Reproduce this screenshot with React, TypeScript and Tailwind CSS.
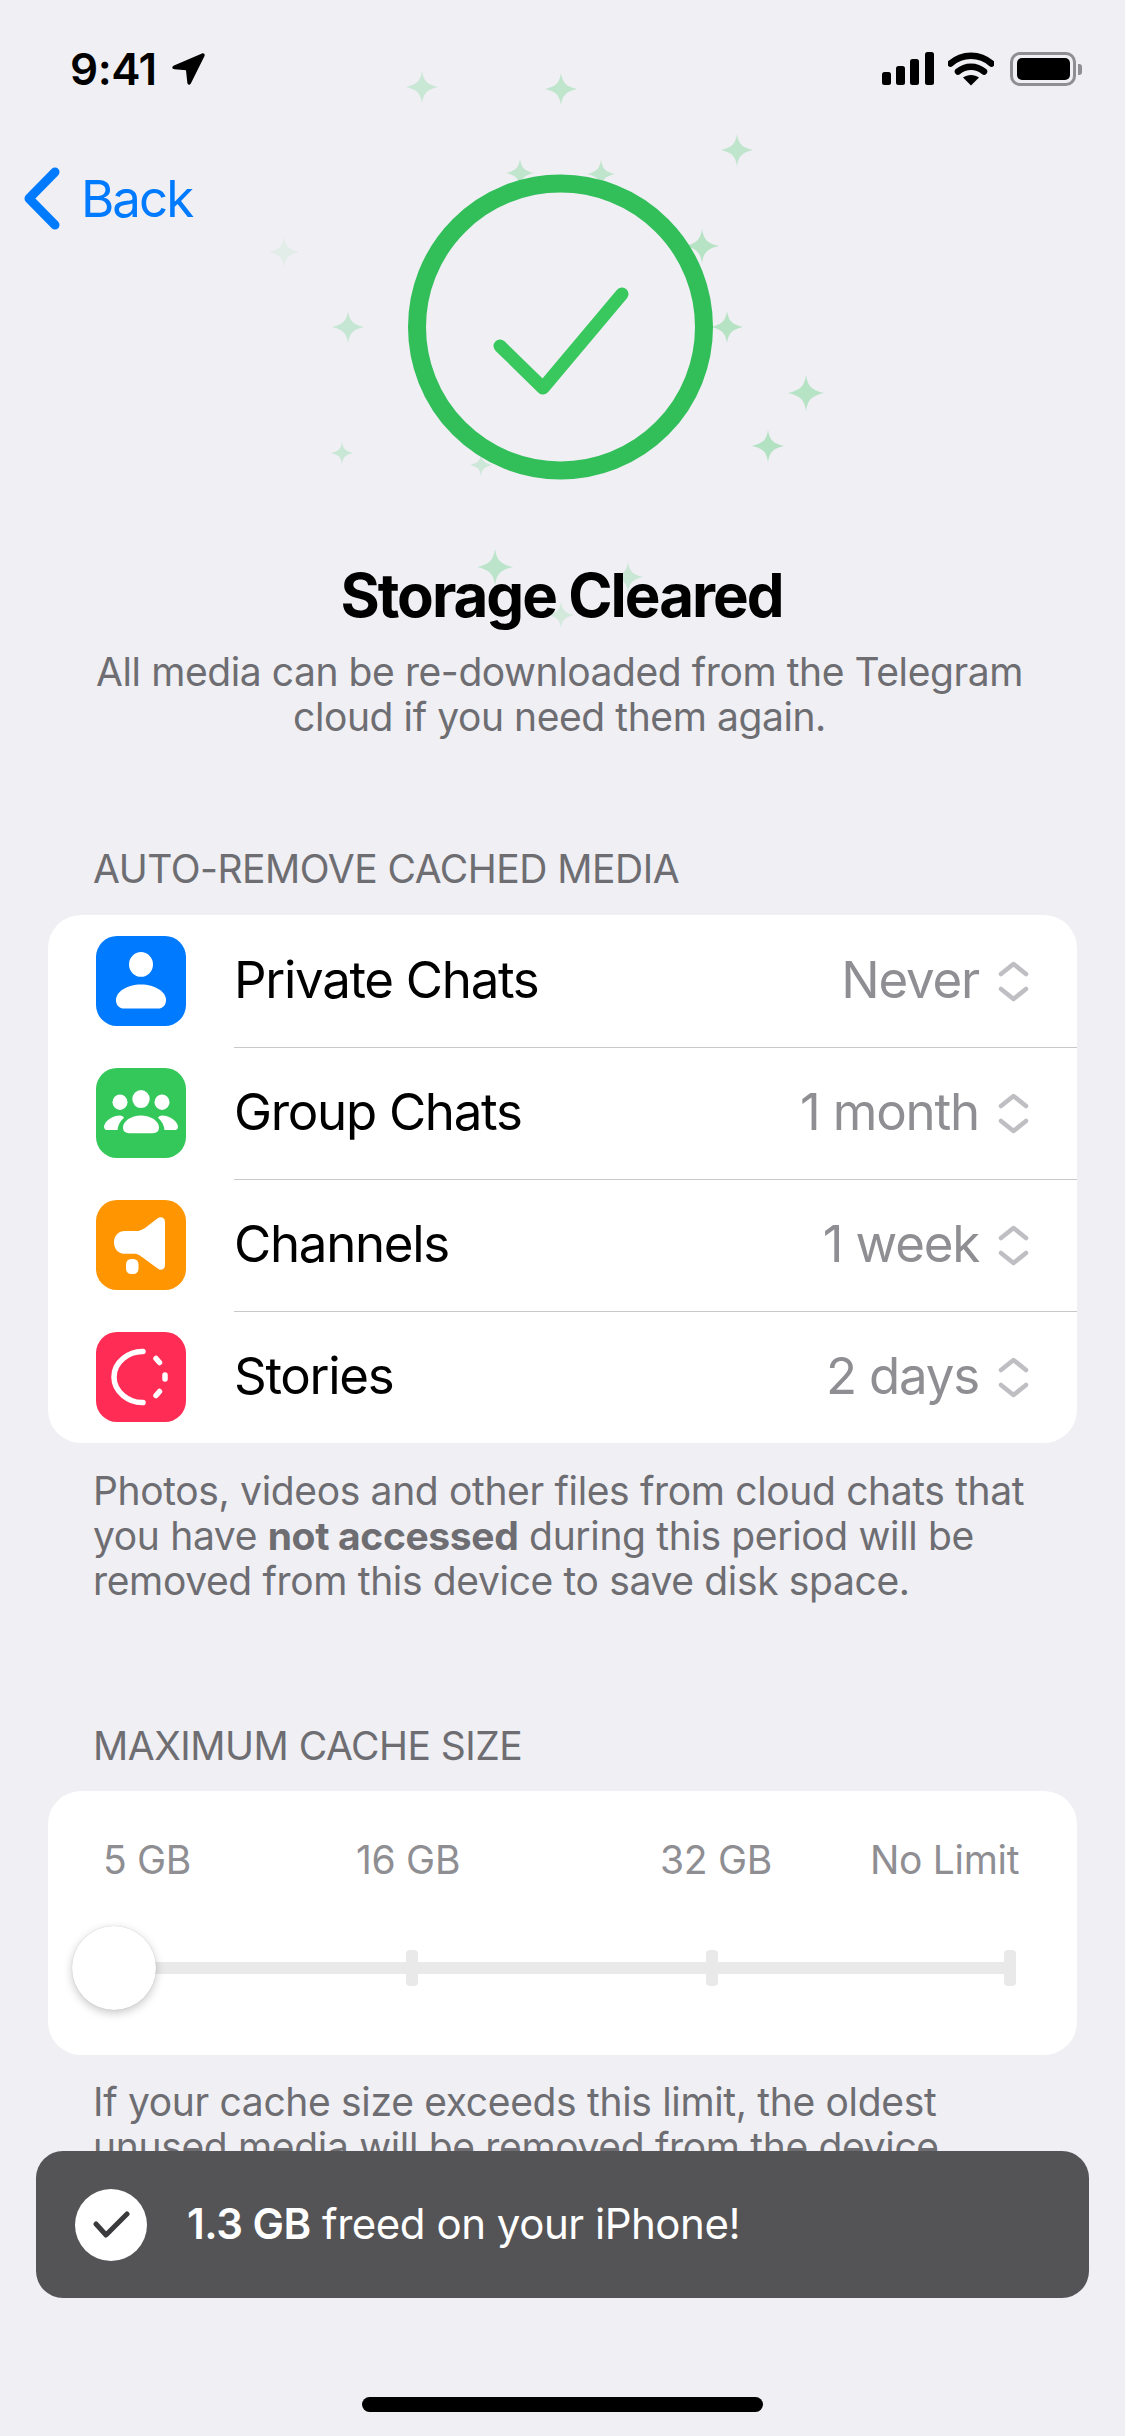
const sparkles: [number, number, number, number][] = [
  [422, 87, 16, 0.2],
  [561, 89, 16, 0.25],
  [737, 150, 16, 0.25],
  [520, 173, 14, 0.25],
  [601, 174, 14, 0.25],
  [702, 246, 17, 0.3],
  [284, 252, 15, 0.07],
  [348, 327, 16, 0.22],
  [727, 327, 16, 0.3],
  [806, 393, 18, 0.3],
  [768, 446, 16, 0.32],
  [342, 453, 11, 0.2],
  [481, 465, 11, 0.18],
  [495, 567, 18, 0.27],
  [628, 577, 15, 0.2],
  [561, 615, 13, 0.15],
];

function StatusBar() {
  return (
    <div className="flex h-[34px] items-center justify-between pl-[70px] pr-[43px]">
      <div className="flex items-center gap-[14px]">
        <span className="text-[44px] leading-[34px] font-semibold tracking-[-0.5px] text-black">9:41</span>
        <svg width="34" height="34" viewBox="0 0 34 34">
          <path d="M31 1.500 3 13.500c-2.500 1.200-2 3.600.6 3.800l11.400.9 1.300 12.200c.3 2.800 2.700 3 3.800.5L33.500 4c.7-1.800-.8-3.200-2.500-2.500Z" fill="#000" />
        </svg>
      </div>
      <div className="flex items-center">
        <svg width="52" height="34" viewBox="0 0 52 34" fill="#000">
          <rect x="0" y="20" width="9" height="13" rx="2.500" />
          <rect x="14" y="14" width="9" height="19" rx="2.500" />
          <rect x="28" y="7" width="9" height="26" rx="2.500" />
          <rect x="43" y="0" width="9" height="33" rx="2.500" />
        </svg>
        <svg className="ml-[14px] mr-[16px]" width="46" height="34" viewBox="0 0 46 34" fill="none">
          <path d="M2.500 11.500C14 1 32 1 43.500 11.500" stroke="#000" strokeWidth="6.500" strokeLinecap="round" />
          <path d="M10 19.500c7.500-6.500 18.500-6.500 26 0" stroke="#000" strokeWidth="6.500" strokeLinecap="round" />
          <path d="M23 33.500 15 25.500c4.500-3.500 11.500-3.500 16 0Z" fill="#000" />
        </svg>
        <div className="flex items-center gap-[2px]">
          <div className="flex h-[34px] w-[66px] items-center justify-center rounded-[10px] border-[3.5px] border-[#8e8e93]">
            <div className="h-[22px] w-[53px] rounded-[5px] bg-black" />
          </div>
          <div className="h-[11px] w-[4px] rounded-r-[3px] bg-[#8e8e93]" />
        </div>
      </div>
    </div>
  );
}

function PersonIcon() {
  return (
    <svg width="90" height="90" viewBox="0 0 90 87" preserveAspectRatio="none" fill="#fff">
      <circle cx="45" cy="27.500" r="12" />
      <path d="M45 47c-14 0-25 7-25 15 0 5 3.500 8 8 8h34c4.500 0 8-3 8-8 0-8-11-15-25-15Z" />
    </svg>
  );
}

function GroupIcon() {
  return (
    <svg width="90" height="90" viewBox="0 0 90 87" preserveAspectRatio="none" fill="#fff">
      <circle cx="45" cy="30" r="8.700" />
      <circle cx="24" cy="33" r="7.500" />
      <circle cx="66" cy="33" r="7.500" />
      <path d="M45 46c-10 0-18 5.500-18 11.500 0 3.500 2.500 5.500 6 5.500h24c3.500 0 6-2 6-5.500C63 51.500 55 46 45 46Z" />
      <path d="M24 46c-8 0-16 6-16 11 0 2 1.500 3 3.500 3h10c.3-4.500 2.500-8.500 6.500-12-1-1.300-2.500-2-4-2Z" />
      <path d="M66 46c8 0 16 6 16 11 0 2-1.500 3-3.500 3h-10c-.3-4.500-2.500-8.500-6.500-12 1-1.300 2.500-2 4-2Z" />
    </svg>
  );
}

function MegaphoneIcon() {
  return (
    <svg width="90" height="90" viewBox="0 0 90 87" preserveAspectRatio="none" fill="#fff">
      <path d="M29 30h11c3 0 6-1 9-3l13-9.500c3-2 7-.5 7 3.500V63c0 4-4 5.500-7 3.500L46 55c-2-1.500-4-2.500-6-3H29c-6.500 0-11-4.500-11-11s4.500-11 11-11Z" />
      <rect x="30" y="57" width="12.500" height="14.500" rx="5" />
    </svg>
  );
}

function StoriesIcon() {
  return (
    <svg width="90" height="90" viewBox="0 0 90 90" fill="none" stroke="#fff" strokeWidth="5.500" strokeLinecap="round">
      <path d="M47 19.500C33 19 18 30 18 45s15 26 29 25.500" />
      <path d="M60 26.500l3.500 4" />
      <path d="M69 43v4" />
      <path d="M63.500 59.500 60 63.500" />
    </svg>
  );
}

function UpDownChevrons() {
  return (
    <svg width="31" height="41" viewBox="0 0 31 41" fill="none" stroke="#bfbfc3" strokeWidth="4.500" strokeLinecap="round" strokeLinejoin="round">
      <path d="M3 13 15.500 3 28 13" />
      <path d="M3 28 15.500 38 28 28" />
    </svg>
  );
}

const rows = [
  { label: "Private Chats", value: "Never", color: "bg-[#007aff]", icon: <PersonIcon /> },
  { label: "Group Chats", value: "1 month", color: "bg-[#34c759]", icon: <GroupIcon /> },
  { label: "Channels", value: "1 week", color: "bg-[#ff9500]", icon: <MegaphoneIcon /> },
  { label: "Stories", value: "2 days", color: "bg-[#ff2d55]", icon: <StoriesIcon /> },
];

export default function App() {
  return (
    <div className="relative h-[2436px] w-[1125px] overflow-hidden bg-[#efeff4] font-['Inter','Liberation_Sans',sans-serif]">
      <svg className="absolute left-0 top-0" width="1125" height="640" viewBox="0 0 1125 640" fill="#34c759">
        {sparkles.map(([x, y, r, o]) => (
          <path
            key={`${x}-${y}`}
            transform={`translate(${x} ${y}) scale(${r / 16})`}
            opacity={o}
            d="M0-16C1.500-6 5-2.500 16 0 5 2.500 1.500 6 0 16-1.500 6-5 2.500-16 0-5-2.500-1.500-6 0-16Z"
          />
        ))}
      </svg>

      <div className="relative pt-[52px]">
        <StatusBar />

        <div className="absolute left-[24px] top-[167px] flex items-center gap-[21px]">
          <svg width="36" height="63" viewBox="0 0 36 63" fill="none" stroke="#007aff" strokeWidth="9" strokeLinecap="round" strokeLinejoin="round">
            <path d="M31 5 5 31.500 31 58" />
          </svg>
          <span className="text-[51px] leading-[63px] tracking-[-2px] text-[#007aff]">Back</span>
        </div>

        <svg className="ml-[408px] mt-[88px]" width="305" height="306" viewBox="0 0 305 306" fill="none" stroke="#32bf5a" strokeLinecap="round" strokeLinejoin="round">
          <circle cx="152.500" cy="153" r="143.500" strokeWidth="18" />
          <path d="M92 172 135 214 214 120" strokeWidth="13" stroke="#38c85e" />
        </svg>

        <h1 className="mt-[79px] pr-[2px] text-center text-[60px] leading-[72px] font-bold tracking-[-2px] text-black">Storage Cleared</h1>
        <p className="mt-[18px] pr-[6px] text-center text-[39px] leading-[45px] tracking-[-0.42px] text-[#6d6d72]">
          All media can be re-downloaded from the Telegram
          <br />
          cloud if you need them again.
        </p>
      </div>

      <div className="mt-[107px] px-[48px]">
        <h2 className="pl-[45px] text-[39px] leading-[45px] tracking-[-0.5px] text-[#6d6d72]">AUTO-REMOVE CACHED MEDIA</h2>
        <div className="mt-[24px] rounded-[33px] bg-white">
          {rows.map((row, i) => (
            <div key={row.label} className="flex h-[132px] items-center pl-[48px]">
              <div className={`flex h-[90px] w-[90px] shrink-0 items-center justify-center rounded-[21px] ${row.color}`}>{row.icon}</div>
              <div className={`ml-[48px] flex h-full flex-1 items-center justify-between pr-[48px] ${i > 0 ? "border-t border-[#c8c8cc]" : ""}`}>
                <span className="-mt-[2px] text-[51px] tracking-[-1.3px] text-black">{row.label}</span>
                <span className="flex items-center gap-[19px] text-[51px] tracking-[-1.2px] text-[#8e8e93]">
                  <span className="-mt-[2px]">{row.value}</span>
                  <UpDownChevrons />
                </span>
              </div>
            </div>
          ))}
        </div>
        <p className="mt-[25px] pl-[45px] text-[39px] leading-[45px] tracking-[-0.35px] text-[#6d6d72]">
          Photos, videos and other files from cloud chats that
          <br />
          you have <b className="font-bold">not accessed</b> during this period will be
          <br />
          removed from this device to save disk space.
        </p>

        <h2 className="mt-[120px] pl-[45px] text-[39px] leading-[45px] tracking-[-0.5px] text-[#6d6d72]">MAXIMUM CACHE SIZE</h2>
        <div className="mt-[23px] h-[264px] rounded-[33px] bg-white pt-[46px]">
          <div className="grid grid-cols-[253px_304px_210px_auto] pl-[55px] text-[39px] leading-[45px] tracking-[-0.3px] text-[#8e8e93]">
            <span>5 GB</span>
            <span>16 GB</span>
            <span>32 GB</span>
            <span>No Limit</span>
          </div>
          <div className="relative ml-[24px] mr-[61px] mt-[44px] flex h-[84px] items-center">
            <div className="absolute left-[42px] right-0 h-[12px] bg-[#e9e9ea]" />
            <div className="relative h-[84px] w-[84px] rounded-full bg-white shadow-[0_3px_10px_rgba(0,0,0,0.22),0_0_1px_rgba(0,0,0,0.2)]" />
            <div className="relative ml-[250px] h-[36px] w-[12px] rounded-[4px] bg-[#e9e9ea]" />
            <div className="relative ml-[288px] h-[36px] w-[12px] rounded-[4px] bg-[#e9e9ea]" />
            <div className="relative ml-[286px] h-[36px] w-[12px] rounded-[4px] bg-[#e9e9ea]" />
          </div>
        </div>
        <p className="mt-[24px] pl-[45px] text-[39px] leading-[45px] tracking-[-0.33px] text-[#6d6d72]">
          If your cache size exceeds this limit, the oldest
          <br />
          unused media will be removed from the device.
        </p>
      </div>

      <div className="absolute left-[36px] top-[2151px] flex h-[147px] w-[1053px] items-center rounded-[27px] bg-[#545456] pl-[39px]">
        <div className="flex h-[72px] w-[72px] items-center justify-center rounded-full bg-white">
          <svg width="37" height="27" viewBox="0 0 37 27" fill="none" stroke="#3a3a3c" strokeWidth="5" strokeLinecap="round" strokeLinejoin="round">
            <path d="M3 13 13 24 34 3" />
          </svg>
        </div>
        <p className="-mt-[2px] ml-[40px] text-[42px] tracking-[-0.47px] text-white">
          <b className="font-semibold">1.3 GB</b> freed on your iPhone!
        </p>
      </div>

      <div className="absolute left-[362px] top-[2397px] h-[15px] w-[401px] rounded-full bg-black" />
    </div>
  );
}
